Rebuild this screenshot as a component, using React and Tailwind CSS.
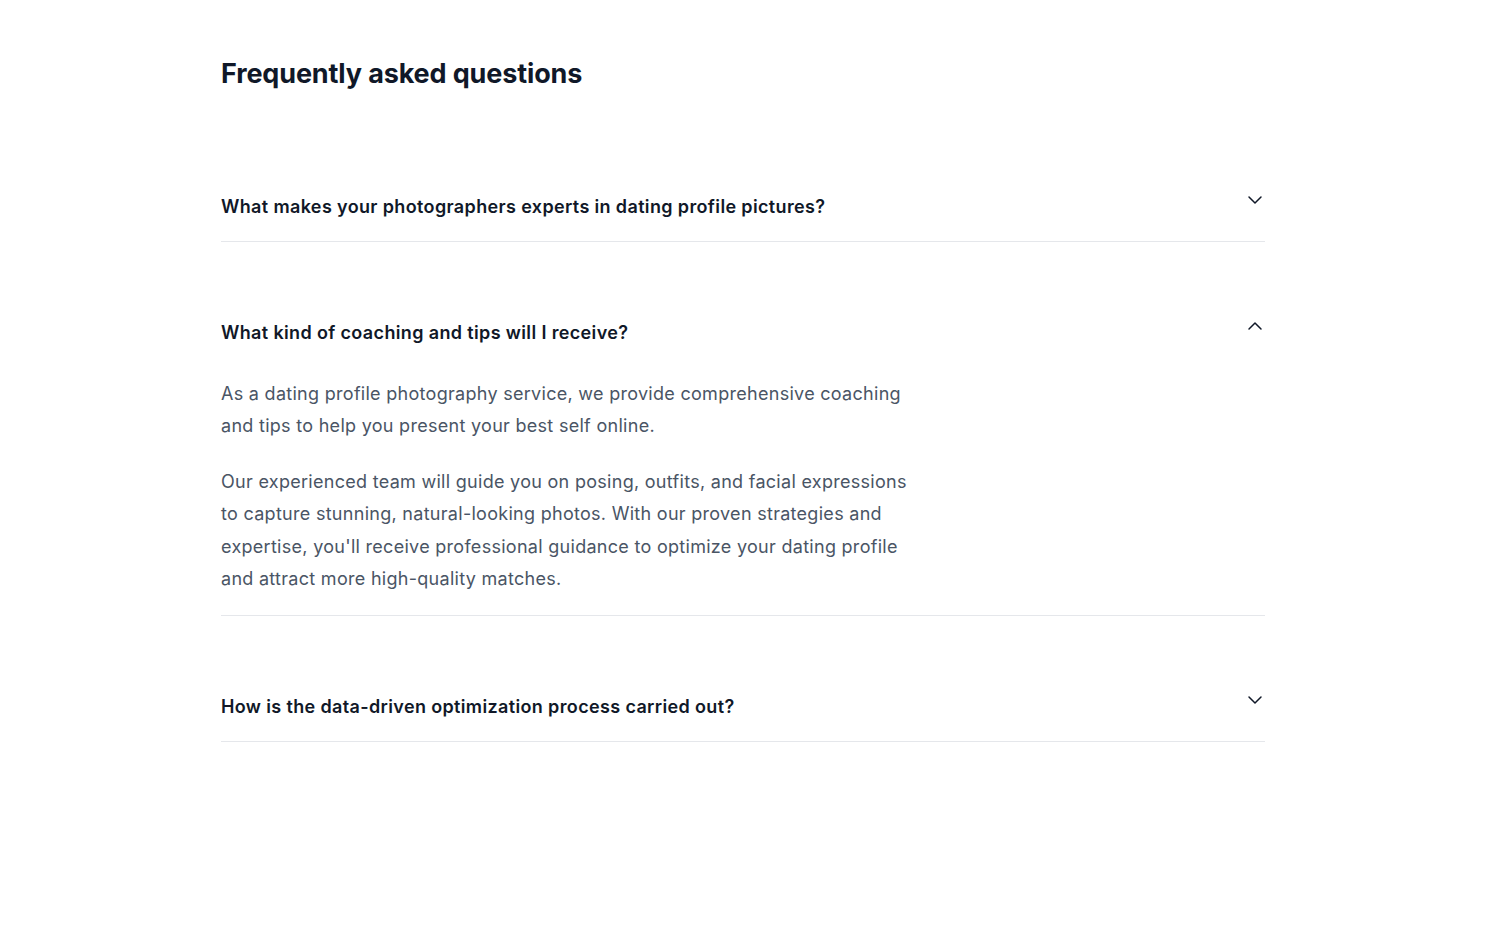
import { useState } from "react";
import { ChevronDown, ChevronUp } from "lucide-react";

const faqs = [
	{
		question: "What makes your photographers experts in dating profile pictures?",
		answer: [
			"Our photographers specialize in dating profile photography and know exactly which shots get noticed.",
		],
	},
	{
		question: "What kind of coaching and tips will I receive?",
		answer: [
			"As a dating profile photography service, we provide comprehensive coaching and tips to help you present your best self online.",
			"Our experienced team will guide you on posing, outfits, and facial expressions to capture stunning, natural-looking photos. With our proven strategies and expertise, you'll receive professional guidance to optimize your dating profile and attract more high-quality matches.",
		],
	},
	{
		question: "How is the data-driven optimization process carried out?",
		answer: [
			"We test your photos and use the results to pick the ones that perform best.",
		],
	},
];

const FaqItem = ({ faq, open, onToggle }) => {
	return (
		<div className="border-b border-gray-200 pt-[77px] pb-5">
			<button
				type="button"
				onClick={onToggle}
				className="flex w-full items-start justify-between text-left text-gray-900"
			>
				<span className="text-lg font-semibold leading-7 tracking-[0.02em]">{faq.question}</span>
				<span className="-mt-[5px] -mr-[2px] ml-6 flex h-6 items-center">
					{open ? (
						<ChevronUp size={24} strokeWidth={1.5} />
					) : (
						<ChevronDown size={24} strokeWidth={1.5} />
					)}
				</span>
			</button>
			{open && (
				<div className="mt-[31px] max-w-[700px] space-y-[23px]">
					{faq.answer.map((p, i) => (
						<p key={i} className="text-lg leading-[1.8] tracking-[0.016em] text-gray-600">
							{p}
						</p>
					))}
				</div>
			)}
		</div>
	);
};

export default function App() {
	const [openIndex, setOpenIndex] = useState(1);

	return (
		<div className="min-h-screen bg-white" style={{ fontFamily: "Inter, 'Noto Sans', sans-serif" }}>
			<div className="mx-auto w-[1046px] pt-[58px] pr-[2px]">
				<h2 className="text-[27px] font-bold leading-8 tracking-[-0.005em] text-gray-900">
					Frequently asked questions
				</h2>
				<div className="mt-[26px]">
					{faqs.map((faq, i) => (
						<FaqItem
							key={i}
							faq={faq}
							open={openIndex === i}
							onToggle={() => setOpenIndex(openIndex === i ? -1 : i)}
						/>
					))}
				</div>
			</div>
		</div>
	);
}
